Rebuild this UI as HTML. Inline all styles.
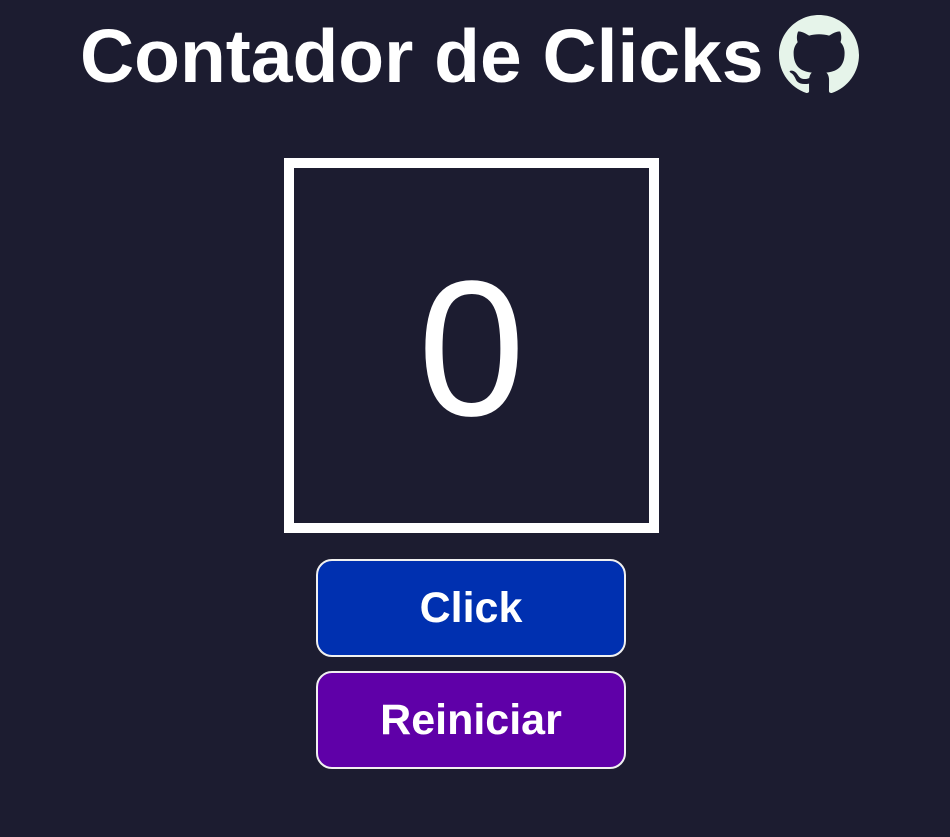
<!DOCTYPE html>
<html><head><meta charset="utf-8"><style>
html,body{margin:0;padding:0;}
body{width:950px;height:837px;background:#1c1c30;font-family:"Liberation Sans",Arial,sans-serif;position:relative;overflow:hidden;}
h1{position:absolute;left:80px;top:6px;margin:0;font-size:75px;font-weight:bold;color:#fff;line-height:100px;white-space:nowrap;}
svg.gh{position:absolute;left:779px;top:15px;}
.box{position:absolute;left:284px;top:158px;width:355px;height:355px;border:10px solid #fff;color:#fff;font-size:193px;text-align:center;line-height:360px;}
.btn{position:absolute;left:316px;width:306px;height:94px;border:2px solid #f0f0f0;border-radius:16px;color:#fff;font-weight:bold;font-size:43px;text-align:center;line-height:94px;}
</style></head><body>
<h1>Contador de Clicks</h1>
<svg class="gh" width="80" height="80" viewBox="0 0 16 16"><path fill="#e6f4ea" d="M8 0C3.58 0 0 3.58 0 8c0 3.54 2.29 6.53 5.47 7.59.4.07.55-.17.55-.38 0-.19-.01-.82-.01-1.49-2.01.37-2.530-.49-2.690-.94-.09-.23-.48-.94-.82-1.130-.28-.15-.68-.52-.01-.53.63-.01 1.080.58 1.230.82.72 1.21 1.870.87 2.330.66.07-.52.28-.87.51-1.07-1.78-.2-3.64-.89-3.64-3.95 0-.87.31-1.59.82-2.15-.08-.2-.36-1.02.08-2.12 0 0 .67-.21 2.2.82.64-.18 1.32-.27 2-.27.68 0 1.36.09 2 .27 1.53-1.04 2.2-.82 2.2-.82.44 1.1.16 1.92.08 2.12.51.56.82 1.27.82 2.15 0 3.07-1.87 3.75-3.65 3.95.29.25.54.73.54 1.48 0 1.07-.01 1.93-.01 2.2 0 .21.15.46.55.38A8.013 8.013 0 0016 8c0-4.420-3.58-8-8-8z"/></svg>
<div class="box">0</div>
<div class="btn" style="top:559px;background:#0030b0;">Click</div>
<div class="btn" style="top:671px;background:#5f00a8;">Reiniciar</div>
</body></html>
